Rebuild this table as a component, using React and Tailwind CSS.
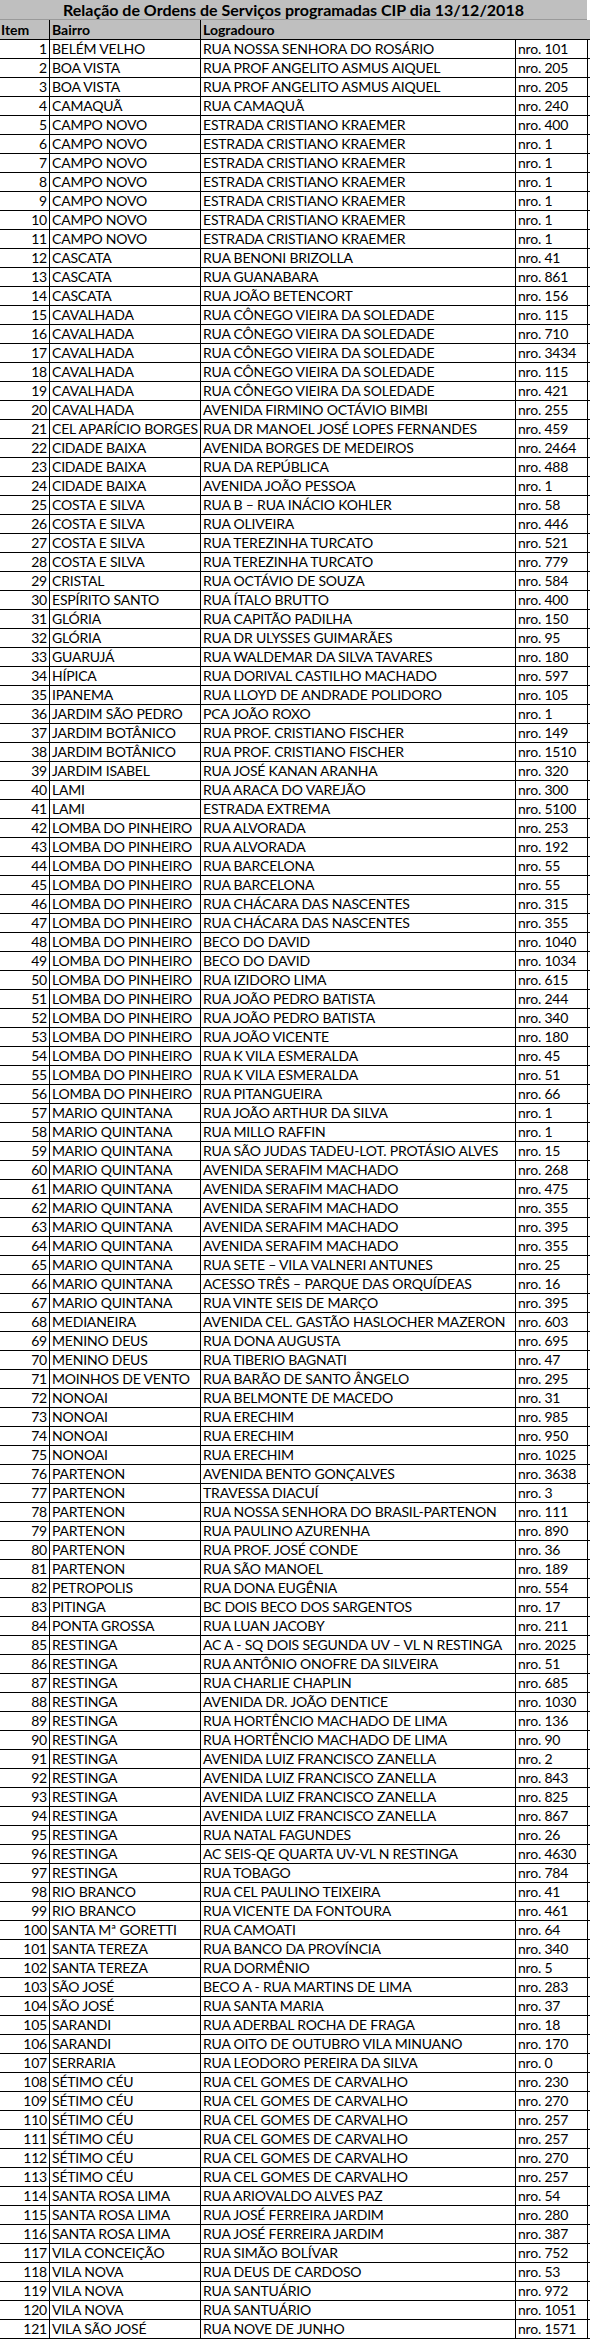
const rows = [
  ["BELÉM VELHO", "RUA NOSSA SENHORA DO ROSÁRIO", "nro. 101"],
  ["BOA VISTA", "RUA PROF ANGELITO ASMUS AIQUEL", "nro. 205"],
  ["BOA VISTA", "RUA PROF ANGELITO ASMUS AIQUEL", "nro. 205"],
  ["CAMAQUÃ", "RUA CAMAQUÃ", "nro. 240"],
  ["CAMPO NOVO", "ESTRADA CRISTIANO KRAEMER", "nro. 400"],
  ["CAMPO NOVO", "ESTRADA CRISTIANO KRAEMER", "nro. 1"],
  ["CAMPO NOVO", "ESTRADA CRISTIANO KRAEMER", "nro. 1"],
  ["CAMPO NOVO", "ESTRADA CRISTIANO KRAEMER", "nro. 1"],
  ["CAMPO NOVO", "ESTRADA CRISTIANO KRAEMER", "nro. 1"],
  ["CAMPO NOVO", "ESTRADA CRISTIANO KRAEMER", "nro. 1"],
  ["CAMPO NOVO", "ESTRADA CRISTIANO KRAEMER", "nro. 1"],
  ["CASCATA", "RUA BENONI BRIZOLLA", "nro. 41"],
  ["CASCATA", "RUA GUANABARA", "nro. 861"],
  ["CASCATA", "RUA JOÃO BETENCORT", "nro. 156"],
  ["CAVALHADA", "RUA CÔNEGO VIEIRA DA SOLEDADE", "nro. 115"],
  ["CAVALHADA", "RUA CÔNEGO VIEIRA DA SOLEDADE", "nro. 710"],
  ["CAVALHADA", "RUA CÔNEGO VIEIRA DA SOLEDADE", "nro. 3434"],
  ["CAVALHADA", "RUA CÔNEGO VIEIRA DA SOLEDADE", "nro. 115"],
  ["CAVALHADA", "RUA CÔNEGO VIEIRA DA SOLEDADE", "nro. 421"],
  ["CAVALHADA", "AVENIDA FIRMINO OCTÁVIO BIMBI", "nro. 255"],
  ["CEL APARÍCIO BORGES", "RUA DR MANOEL JOSÉ LOPES FERNANDES", "nro. 459"],
  ["CIDADE BAIXA", "AVENIDA BORGES DE MEDEIROS", "nro. 2464"],
  ["CIDADE BAIXA", "RUA DA REPÚBLICA", "nro. 488"],
  ["CIDADE BAIXA", "AVENIDA JOÃO PESSOA", "nro. 1"],
  ["COSTA E SILVA", "RUA B – RUA INÁCIO KOHLER", "nro. 58"],
  ["COSTA E SILVA", "RUA OLIVEIRA", "nro. 446"],
  ["COSTA E SILVA", "RUA TEREZINHA TURCATO", "nro. 521"],
  ["COSTA E SILVA", "RUA TEREZINHA TURCATO", "nro. 779"],
  ["CRISTAL", "RUA OCTÁVIO DE SOUZA", "nro. 584"],
  ["ESPÍRITO SANTO", "RUA ÍTALO BRUTTO", "nro. 400"],
  ["GLÓRIA", "RUA CAPITÃO PADILHA", "nro. 150"],
  ["GLÓRIA", "RUA DR ULYSSES GUIMARÃES", "nro. 95"],
  ["GUARUJÁ", "RUA WALDEMAR DA SILVA TAVARES", "nro. 180"],
  ["HÍPICA", "RUA DORIVAL CASTILHO MACHADO", "nro. 597"],
  ["IPANEMA", "RUA LLOYD DE ANDRADE POLIDORO", "nro. 105"],
  ["JARDIM SÃO PEDRO", "PCA JOÃO ROXO", "nro. 1"],
  ["JARDIM BOTÂNICO", "RUA PROF. CRISTIANO FISCHER", "nro. 149"],
  ["JARDIM BOTÂNICO", "RUA PROF. CRISTIANO FISCHER", "nro. 1510"],
  ["JARDIM ISABEL", "RUA JOSÉ KANAN ARANHA", "nro. 320"],
  ["LAMI", "RUA ARACA DO VAREJÃO", "nro. 300"],
  ["LAMI", "ESTRADA EXTREMA", "nro. 5100"],
  ["LOMBA DO PINHEIRO", "RUA ALVORADA", "nro. 253"],
  ["LOMBA DO PINHEIRO", "RUA ALVORADA", "nro. 192"],
  ["LOMBA DO PINHEIRO", "RUA BARCELONA", "nro. 55"],
  ["LOMBA DO PINHEIRO", "RUA BARCELONA", "nro. 55"],
  ["LOMBA DO PINHEIRO", "RUA CHÁCARA DAS NASCENTES", "nro. 315"],
  ["LOMBA DO PINHEIRO", "RUA CHÁCARA DAS NASCENTES", "nro. 355"],
  ["LOMBA DO PINHEIRO", "BECO DO DAVID", "nro. 1040"],
  ["LOMBA DO PINHEIRO", "BECO DO DAVID", "nro. 1034"],
  ["LOMBA DO PINHEIRO", "RUA IZIDORO LIMA", "nro. 615"],
  ["LOMBA DO PINHEIRO", "RUA JOÃO PEDRO BATISTA", "nro. 244"],
  ["LOMBA DO PINHEIRO", "RUA JOÃO PEDRO BATISTA", "nro. 340"],
  ["LOMBA DO PINHEIRO", "RUA JOÃO VICENTE", "nro. 180"],
  ["LOMBA DO PINHEIRO", "RUA K VILA ESMERALDA", "nro. 45"],
  ["LOMBA DO PINHEIRO", "RUA K VILA ESMERALDA", "nro. 51"],
  ["LOMBA DO PINHEIRO", "RUA PITANGUEIRA", "nro. 66"],
  ["MARIO QUINTANA", "RUA JOÃO ARTHUR DA SILVA", "nro. 1"],
  ["MARIO QUINTANA", "RUA MILLO RAFFIN", "nro. 1"],
  ["MARIO QUINTANA", "RUA SÃO JUDAS TADEU-LOT. PROTÁSIO ALVES", "nro. 15"],
  ["MARIO QUINTANA", "AVENIDA SERAFIM MACHADO", "nro. 268"],
  ["MARIO QUINTANA", "AVENIDA SERAFIM MACHADO", "nro. 475"],
  ["MARIO QUINTANA", "AVENIDA SERAFIM MACHADO", "nro. 355"],
  ["MARIO QUINTANA", "AVENIDA SERAFIM MACHADO", "nro. 395"],
  ["MARIO QUINTANA", "AVENIDA SERAFIM MACHADO", "nro. 355"],
  ["MARIO QUINTANA", "RUA SETE – VILA VALNERI ANTUNES", "nro. 25"],
  ["MARIO QUINTANA", "ACESSO TRÊS – PARQUE DAS ORQUÍDEAS", "nro. 16"],
  ["MARIO QUINTANA", "RUA VINTE SEIS DE MARÇO", "nro. 395"],
  ["MEDIANEIRA", "AVENIDA CEL. GASTÃO HASLOCHER MAZERON", "nro. 603"],
  ["MENINO DEUS", "RUA DONA AUGUSTA", "nro. 695"],
  ["MENINO DEUS", "RUA TIBERIO BAGNATI", "nro. 47"],
  ["MOINHOS DE VENTO", "RUA BARÃO DE SANTO ÂNGELO", "nro. 295"],
  ["NONOAI", "RUA BELMONTE DE MACEDO", "nro. 31"],
  ["NONOAI", "RUA ERECHIM", "nro. 985"],
  ["NONOAI", "RUA ERECHIM", "nro. 950"],
  ["NONOAI", "RUA ERECHIM", "nro. 1025"],
  ["PARTENON", "AVENIDA BENTO GONÇALVES", "nro. 3638"],
  ["PARTENON", "TRAVESSA DIACUÍ", "nro. 3"],
  ["PARTENON", "RUA NOSSA SENHORA DO BRASIL-PARTENON", "nro. 111"],
  ["PARTENON", "RUA PAULINO AZURENHA", "nro. 890"],
  ["PARTENON", "RUA PROF. JOSÉ CONDE", "nro. 36"],
  ["PARTENON", "RUA SÃO MANOEL", "nro. 189"],
  ["PETROPOLIS", "RUA DONA EUGÊNIA", "nro. 554"],
  ["PITINGA", "BC DOIS BECO DOS SARGENTOS", "nro. 17"],
  ["PONTA GROSSA", "RUA LUAN JACOBY", "nro. 211"],
  ["RESTINGA", "AC A - SQ DOIS SEGUNDA UV – VL N RESTINGA", "nro. 2025"],
  ["RESTINGA", "RUA ANTÔNIO ONOFRE DA SILVEIRA", "nro. 51"],
  ["RESTINGA", "RUA CHARLIE CHAPLIN", "nro. 685"],
  ["RESTINGA", "AVENIDA DR. JOÃO DENTICE", "nro. 1030"],
  ["RESTINGA", "RUA HORTÊNCIO MACHADO DE LIMA", "nro. 136"],
  ["RESTINGA", "RUA HORTÊNCIO MACHADO DE LIMA", "nro. 90"],
  ["RESTINGA", "AVENIDA LUIZ FRANCISCO ZANELLA", "nro. 2"],
  ["RESTINGA", "AVENIDA LUIZ FRANCISCO ZANELLA", "nro. 843"],
  ["RESTINGA", "AVENIDA LUIZ FRANCISCO ZANELLA", "nro. 825"],
  ["RESTINGA", "AVENIDA LUIZ FRANCISCO ZANELLA", "nro. 867"],
  ["RESTINGA", "RUA NATAL FAGUNDES", "nro. 26"],
  ["RESTINGA", "AC SEIS-QE QUARTA UV-VL N RESTINGA", "nro. 4630"],
  ["RESTINGA", "RUA TOBAGO", "nro. 784"],
  ["RIO BRANCO", "RUA CEL PAULINO TEIXEIRA", "nro. 41"],
  ["RIO BRANCO", "RUA VICENTE DA FONTOURA", "nro. 461"],
  ["SANTA Mª GORETTI", "RUA CAMOATI", "nro. 64"],
  ["SANTA TEREZA", "RUA BANCO DA PROVÍNCIA", "nro. 340"],
  ["SANTA TEREZA", "RUA DORMÊNIO", "nro. 5"],
  ["SÃO JOSÉ", "BECO A - RUA MARTINS DE LIMA", "nro. 283"],
  ["SÃO JOSÉ", "RUA SANTA MARIA", "nro. 37"],
  ["SARANDI", "RUA ADERBAL ROCHA DE FRAGA", "nro. 18"],
  ["SARANDI", "RUA OITO DE OUTUBRO VILA MINUANO", "nro. 170"],
  ["SERRARIA", "RUA LEODORO PEREIRA DA SILVA", "nro. 0"],
  ["SÉTIMO CÉU", "RUA CEL GOMES DE CARVALHO", "nro. 230"],
  ["SÉTIMO CÉU", "RUA CEL GOMES DE CARVALHO", "nro. 270"],
  ["SÉTIMO CÉU", "RUA CEL GOMES DE CARVALHO", "nro. 257"],
  ["SÉTIMO CÉU", "RUA CEL GOMES DE CARVALHO", "nro. 257"],
  ["SÉTIMO CÉU", "RUA CEL GOMES DE CARVALHO", "nro. 270"],
  ["SÉTIMO CÉU", "RUA CEL GOMES DE CARVALHO", "nro. 257"],
  ["SANTA ROSA LIMA", "RUA ARIOVALDO ALVES PAZ", "nro. 54"],
  ["SANTA ROSA LIMA", "RUA JOSÉ FERREIRA JARDIM", "nro. 280"],
  ["SANTA ROSA LIMA", "RUA JOSÉ FERREIRA JARDIM", "nro. 387"],
  ["VILA CONCEIÇÃO", "RUA SIMÃO BOLÍVAR", "nro. 752"],
  ["VILA NOVA", "RUA DEUS DE CARDOSO", "nro. 53"],
  ["VILA NOVA", "RUA SANTUÁRIO", "nro. 972"],
  ["VILA NOVA", "RUA SANTUÁRIO", "nro. 1051"],
  ["VILA SÃO JOSÉ", "RUA NOVE DE JUNHO", "nro. 1571"],
];

const cols = "grid grid-cols-[50px_151px_315px_72px]";

export default function App() {
  return (
    <div className="w-[590px] bg-white text-black font-['Lato',sans-serif] text-[14px]">
      {/* title */}
      <div className="h-[20px] w-[587px] bg-[#bfbfbf] border-b border-[#9a9a9a] text-center font-bold text-[16px] leading-[19px]">
        Relação de Ordens de Serviços programadas CIP dia 13/12/2018
      </div>

      {/* header */}
      <div className="grid grid-cols-[50px_151px_386px] h-[20px] bg-[#bfbfbf] border-b border-black font-bold leading-[19px]">
        <div className="border-r border-black pl-[1px]">Item</div>
        <div className="border-r border-black pl-[2px]">Bairro</div>
        <div className="pl-[2px]">Logradouro</div>
      </div>

      {rows.map((r, i) => (
        <div key={i} className={`${cols} h-[19px] border-b border-black leading-[18px] whitespace-nowrap tracking-[-0.2px]`}>
          <div className="border-r border-black text-right pr-[2px]">{i + 1}</div>
          <div className="border-r border-black pl-[2px] overflow-hidden">{r[0]}</div>
          <div className="border-r border-black pl-[2px] overflow-hidden">{r[1]}</div>
          <div className="border-r border-black pl-[2px]">{r[2]}</div>
        </div>
      ))}
    </div>
  );
}
